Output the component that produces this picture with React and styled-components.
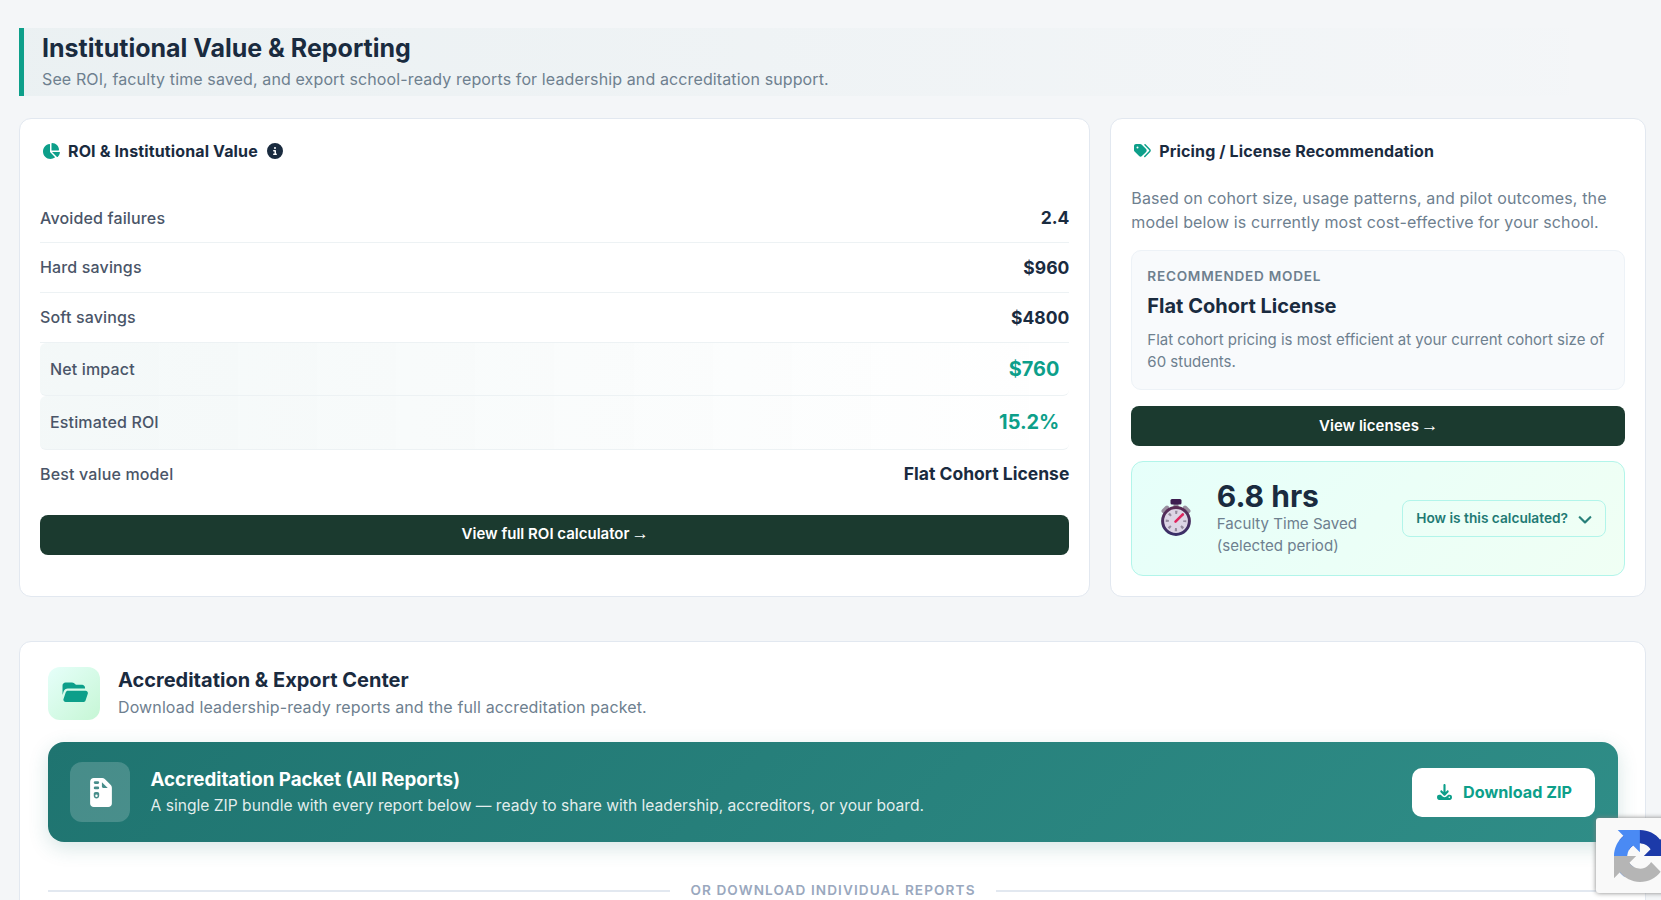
import React from "react";
import styled, { createGlobalStyle } from "styled-components";
import { FaChartPie, FaCircleInfo, FaChevronDown } from "react-icons/fa6";

const rows = [
  { label: "Avoided failures", value: "2.4" },
  { label: "Hard savings", value: "$960" },
  { label: "Soft savings", value: "$4800" },
  { label: "Net impact", value: "$760", highlight: true },
  { label: "Estimated ROI", value: "15.2%", highlight: true },
  { label: "Best value model", value: "Flat Cohort License" },
];

function TagsIcon() {
  return (
    <svg viewBox="0 0 576 512" fill="currentColor">
      <path d="M401.2 39.1L549.4 189.4c27.7 28.1 27.7 73.1 0 101.2L393 448.9c-9.3 9.4-24.5 9.5-33.9 .2s-9.5-24.5-.2-33.9L515.3 256.8c9.2-9.3 9.2-24.4 0-33.7L367 72.9c-9.3-9.4-9.2-24.6 .2-33.9s24.6-9.2 33.9 .2zM32.1 229.5L32.1 96c0-35.3 28.7-64 64-64l133.5 0c17 0 33.3 6.7 45.3 18.7l144 144c25 25 25 65.5 0 90.5L285.4 418.7c-25 25-65.5 25-90.5 0l-144-144c-12-12-18.7-28.3-18.7-45.3zm144-85.5a32 32 0 1 0-64 0 32 32 0 1 0 64 0z" />
    </svg>
  );
}

function FolderIcon() {
  return (
    <svg width="27" height="24" viewBox="0 0 576 512" fill="currentColor">
      <path d="M56 225.6L32.4 296.2 32.4 96c0-35.3 28.7-64 64-64l138.7 0c13.8 0 27.3 4.5 38.4 12.8l38.4 28.8c5.5 4.2 12.3 6.4 19.2 6.4l117.3 0c35.3 0 64 28.7 64 64l0 16-365.4 0c-41.3 0-78 26.4-91.1 65.6zM477.8 448L99 448c-32.8 0-55.9-32.1-45.5-63.2l48-144C108 221.2 126.4 208 147 208l378.8 0c32.8 0 55.9 32.1 45.5 63.2l-48 144c-6.5 19.6-24.9 32.8-45.5 32.8z" />
    </svg>
  );
}

function ZipIcon() {
  return (
    <svg width="22" height="29" viewBox="0 0 384 512" fill="currentColor">
      <path
        fillRule="evenodd"
        d="M0 64C0 28.7 28.7 0 64 0L213.5 0c17 0 33.3 6.7 45.3 18.7L365.3 125.3c12 12 18.7 28.3 18.7 45.3L384 448c0 35.3-28.7 64-64 64L64 512c-35.3 0-64-28.7-64-64L0 64zM208 74l0 78c0 13.3 10.7 24 24 24L311 176 208 74zM88 56a24 24 0 0 0 0 48l48 0a24 24 0 0 0 0-48zM88 152a24 24 0 0 0 0 48l48 0a24 24 0 0 0 0-48zM96 248c-17.7 0-32 14.3-32 32l0 32c0 26.5 21.5 48 48 48s48-21.5 48-48l0-32c0-17.7-14.3-32-32-32zM112 290a22 22 0 0 1 0 44 22 22 0 0 1 0-44z"
      />
    </svg>
  );
}

function DownloadIcon() {
  return (
    <svg width="15" height="17" viewBox="0 0 448 512" fill="currentColor">
      <path d="M256 32c0-17.7-14.3-32-32-32s-32 14.3-32 32l0 210.7-41.4-41.4c-12.5-12.5-32.8-12.5-45.3 0s-12.5 32.8 0 45.3l96 96c12.5 12.5 32.8 12.5 45.3 0l96-96c12.5-12.5 12.5-32.8 0-45.3s-32.8-12.5-45.3 0L256 242.7 256 32zM64 320c-35.3 0-64 28.7-64 64l0 32c0 35.3 28.7 64 64 64l320 0c35.3 0 64-28.7 64-64l0-32c0-35.3-28.7-64-64-64l-46.9 0-56.6 56.6c-31.2 31.2-81.9 31.2-113.1 0L110.9 320 64 320zm304 56a24 24 0 1 1 0 48 24 24 0 1 1 0-48z" />
    </svg>
  );
}

function StopwatchIcon() {
  return (
    <svg width="30" height="37" viewBox="0 0 30 37">
      <defs>
        <linearGradient id="rim" x1="0" y1="0" x2="0" y2="1">
          <stop offset="0" stopColor="#5a2b55" />
          <stop offset="1" stopColor="#3a3068" />
        </linearGradient>
      </defs>
      <path d="M2.5 12l3.5-3.5M27.5 12l-3.5-3.5" stroke="#998fa0" strokeWidth="4" strokeLinecap="round" />
      <rect x="12.5" y="4" width="5" height="6" fill="#8d8496" />
      <rect x="9.5" y="0" width="11" height="5.5" rx="1.5" fill="#3d1d50" />
      <circle cx="15" cy="22" r="13.4" fill="#ddd5e5" stroke="url(#rim)" strokeWidth="3" />
      <circle cx="15" cy="22" r="8.7" fill="none" stroke="#958b9d" strokeWidth="3.2" strokeDasharray="2.2 4.633" strokeDashoffset="1.1" />
      <path d="M14.5 22.7l7.3-7.3" stroke="#e0245e" strokeWidth="2.6" strokeLinecap="round" />
    </svg>
  );
}

function RecaptchaLogo() {
  return (
    <svg width="52" height="52" viewBox="0 0 64 64">
      <path fill="#1c3aa9" d="M64 31.955l-.033-1.37V4.687l-7.16 7.16C50.948 4.674 42.033.093 32.05.093c-10.4 0-19.622 4.96-25.458 12.64l11.736 11.86a15.55 15.55 0 0 1 4.754-5.334c2.05-1.6 4.952-2.906 8.968-2.906.485 0 .86.057 1.135.163 4.976.393 9.288 3.14 11.828 7.124l-8.307 8.307L64 31.953" />
      <path fill="#4a8af4" d="M31.862.094l-1.37.033H4.594l7.16 7.16C4.58 13.147 0 22.06 0 32.046c0 10.4 4.96 19.622 12.64 25.458L24.5 45.768a15.55 15.55 0 0 1-5.334-4.754c-1.6-2.05-2.906-4.952-2.906-8.968 0-.485.057-.86.163-1.135.393-4.976 3.14-9.288 7.124-11.828l8.307 8.307L31.86.095" />
      <path fill="#b5b5b5" d="M.001 32.045l.033 1.37v25.898l7.16-7.16c5.86 7.173 14.774 11.754 24.76 11.754 10.4 0 19.622-4.96 25.458-12.64l-11.736-11.86a15.55 15.55 0 0 1-4.754 5.334c-2.05 1.6-4.952 2.906-8.968 2.906-.485 0-.86-.057-1.135-.163-4.976-.393-9.288-3.14-11.828-7.124l8.307-8.307L0 32.047" />
    </svg>
  );
}

function App() {
  return (
    <Page>
      <GlobalStyle />
      <SectionHeader>
        <h1>Institutional Value &amp; Reporting</h1>
        <p>See ROI, faculty time saved, and export school-ready reports for leadership and accreditation support.</p>
      </SectionHeader>

      <Grid>
        <Card>
          <CardTitle>
            <FaChartPie />
            <h2>ROI &amp; Institutional Value</h2>
            <InfoIcon />
          </CardTitle>
          <RowList>
            {rows.map((row) => (
              <Row key={row.label} $highlight={row.highlight}>
                <span>{row.label}</span>
                <strong>{row.value}</strong>
              </Row>
            ))}
          </RowList>
          <DarkButton $lift={3}>
            View full ROI calculator <Arrow>→</Arrow>
          </DarkButton>
        </Card>

        <Card>
          <CardTitle>
            <TagsIcon />
            <h2>Pricing / License Recommendation</h2>
          </CardTitle>
          <Intro>
            Based on cohort size, usage patterns, and pilot outcomes, the model below is currently most
            cost-effective for your school.
          </Intro>
          <ModelBox>
            <ModelLabel>Recommended model</ModelLabel>
            <ModelName>Flat Cohort License</ModelName>
            <ModelText>Flat cohort pricing is most efficient at your current cohort size of 60 students.</ModelText>
          </ModelBox>
          <DarkButton $lift={1}>
            View licenses <Arrow>→</Arrow>
          </DarkButton>
          <TimeCard>
            <StopwatchIcon />
            <TimeText>
              <strong>6.8 hrs</strong>
              <span>Faculty Time Saved (selected period)</span>
            </TimeText>
            <HowButton>
              How is this calculated?
              <FaChevronDown />
            </HowButton>
          </TimeCard>
        </Card>
      </Grid>

      <ExportCard>
        <ExportHeader>
          <FolderTile>
            <FolderIcon />
          </FolderTile>
          <ExportTitle>
            <h2>Accreditation &amp; Export Center</h2>
            <p>Download leadership-ready reports and the full accreditation packet.</p>
          </ExportTitle>
        </ExportHeader>
        <Banner>
          <ZipTile>
            <ZipIcon />
          </ZipTile>
          <BannerText>
            <h3>Accreditation Packet (All Reports)</h3>
            <p>A single ZIP bundle with every report below — ready to share with leadership, accreditors, or your board.</p>
          </BannerText>
          <DownloadButton>
            <DownloadIcon />
            Download ZIP
          </DownloadButton>
        </Banner>
        <Divider>Or download individual reports</Divider>
      </ExportCard>

      <RecaptchaBadge>
        <RecaptchaLogo />
      </RecaptchaBadge>
    </Page>
  );
}

export default App;

const GlobalStyle = createGlobalStyle`
  * {
    box-sizing: border-box;
  }
  body {
    margin: 0;
    background: #f4f6f8;
    font-family: Inter, "Liberation Sans", sans-serif;
    color: #1a2b3f;
    overflow: hidden;
  }
  h1, h2, h3, p {
    margin: 0;
  }
  button {
    font-family: inherit;
    cursor: pointer;
  }
`;
const Page = styled.div`
  height: 900px;
  overflow: hidden;
  padding: 28px 15px 0 19px;
`;
const SectionHeader = styled.header`
  height: 68px;
  padding: 4px 0 0 18px;
  border-left: 5px solid #0d9f8a;
  background: linear-gradient(90deg, rgba(31, 122, 122, 0.045), rgba(31, 122, 122, 0));
  h1 {
    font-size: 25px;
    font-weight: 700;
    line-height: 32px;
  }
  p {
    font-size: 16px;
    line-height: 24px;
    letter-spacing: 0.12px;
    margin-top: 3px;
    color: #6e808f;
  }
`;
const Grid = styled.div`
  display: grid;
  grid-template-columns: 2fr 1fr;
  gap: 20px;
  margin-top: 22px;
`;
const Card = styled.section`
  height: 479px;
  padding: 20px;
  background: #fff;
  border: 1px solid #e2e8f0;
  border-radius: 12px;
`;
const CardTitle = styled.div`
  display: flex;
  align-items: center;
  height: 24px;
  padding-left: 2px;
  h2 {
    font-size: 16px;
    font-weight: 700;
    letter-spacing: 0.13px;
    margin-left: 8px;
  }
  > svg:first-child {
    width: 18px;
    height: 16px;
    color: #0d9f8a;
  }
`;
const InfoIcon = styled(FaCircleInfo)`
  width: 16px;
  height: 16px;
  margin-left: 9px;
`;
const RowList = styled.div`
  margin: 30.2px 0 16.2px;
`;
const Row = styled.div`
  display: flex;
  align-items: center;
  justify-content: space-between;
  height: ${(props) => (props.$highlight ? "53.6px" : "49.8px")};
  padding: ${(props) => (props.$highlight ? "0 10px" : "0")};
  border-bottom: 1px solid #edf2f4;
  border-radius: ${(props) => (props.$highlight ? "6px" : "0")};
  background: ${(props) =>
    props.$highlight ? "linear-gradient(90deg, rgba(31, 122, 122, 0.05), rgba(31, 122, 122, 0))" : "none"};
  span {
    font-size: 16px;
    font-weight: 500;
    letter-spacing: 0.15px;
    color: #4a5568;
  }
  strong {
    font-size: ${(props) => (props.$highlight ? "19.9px" : "17.5px")};
    font-weight: 700;
    color: ${(props) => (props.$highlight ? "#0d9f8a" : "#1a2b3f")};
  }
  &:last-child {
    height: 48.8px;
    padding-bottom: 1px;
    border-bottom: none;
  }
`;
const DarkButton = styled.button`
  display: block;
  width: 100%;
  height: 40px;
  padding: 0 0 ${(props) => props.$lift}px;
  border: none;
  border-radius: 8px;
  background: #1b3a2f;
  color: #fff;
  font-size: 15px;
  font-weight: 600;
`;
const Arrow = styled.span`
  margin: 0 -1px 0 -2px;
  font-family: "Liberation Sans", sans-serif;
  font-size: 17.5px;
  font-weight: 400;
  line-height: 1;
`;
const Intro = styled.p`
  margin-top: 23px;
  font-size: 16px;
  line-height: 24px;
  letter-spacing: 0.125px;
  color: #6e808f;
`;
const ModelBox = styled.div`
  height: 140px;
  margin: 16px 0;
  padding: 16px 15px;
  background: #f8fafc;
  border: 1px solid #edf2f7;
  border-radius: 10px;
`;
const ModelLabel = styled.div`
  font-size: 13.6px;
  font-weight: 600;
  line-height: 19px;
  letter-spacing: 0.74px;
  text-transform: uppercase;
  color: #6e808f;
`;
const ModelName = styled.div`
  margin-top: 5px;
  font-size: 20px;
  font-weight: 700;
  line-height: 30px;
`;
const ModelText = styled.div`
  margin-top: 8px;
  font-size: 15px;
  line-height: 22px;
  color: #6e808f;
`;
const TimeCard = styled.div`
  display: flex;
  align-items: center;
  height: 115px;
  margin-top: 15px;
  padding: 0 18px 0 29px;
  border: 1px solid #b2f5ea;
  border-radius: 12px;
  background: linear-gradient(135deg, #e6fffa, #f0fff4);
  > svg {
    margin-bottom: 2px;
  }
`;
const TimeText = styled.div`
  flex: 1;
  margin-left: 25.5px;
  strong {
    display: block;
    font-size: 30px;
    font-weight: 700;
    line-height: 32px;
  }
  span {
    display: block;
    width: 160px;
    margin-top: 1px;
    font-size: 15.1px;
    line-height: 22px;
    color: #6e808f;
  }
`;
const HowButton = styled.button`
  display: flex;
  align-items: center;
  gap: 10px;
  height: 37px;
  padding: 0 13px 1px;
  border: 1px solid #b2f5ea;
  border-radius: 8px;
  background: transparent;
  color: #1f7a74;
  font-size: 13.7px;
  font-weight: 600;
  svg {
    width: 14px;
    height: 14px;
    margin-top: 1px;
    stroke: currentColor;
    stroke-width: 20px;
  }
`;
const ExportCard = styled.section`
  height: 400px;
  margin-top: 44px;
  padding: 25px 27px 0 28px;
  background: #fff;
  border: 1px solid #e2e8f0;
  border-radius: 12px;
`;
const ExportHeader = styled.div`
  display: flex;
  align-items: center;
  gap: 18px;
  height: 53px;
`;
const ExportTitle = styled.div`
  padding-bottom: 3px;
  h2 {
    font-size: 20px;
    font-weight: 700;
    line-height: 28px;
  }
  p {
    font-size: 16px;
    line-height: 24px;
    letter-spacing: 0.12px;
    margin-top: 1px;
    color: #6e808f;
  }
`;
const FolderTile = styled.div`
  display: flex;
  align-items: center;
  justify-content: center;
  width: 52px;
  height: 53px;
  padding-bottom: 2px;
  border-radius: 12px;
  background: linear-gradient(135deg, #e6fffa, #c6f6d5);
  color: #0d9f8a;
`;
const Banner = styled.div`
  display: flex;
  align-items: center;
  height: 100px;
  margin-top: 22px;
  padding: 0 23px 0 22px;
  border-radius: 16px;
  background: linear-gradient(135deg, #1f7470, #2f8d87);
  box-shadow: 0 6px 20px rgba(31, 116, 112, 0.18);
  color: #fff;
`;
const ZipTile = styled.div`
  display: flex;
  align-items: center;
  justify-content: center;
  width: 60px;
  height: 60px;
  padding-left: 1px;
  border-radius: 12px;
  background: rgba(255, 255, 255, 0.18);
`;
const BannerText = styled.div`
  flex: 1;
  margin-left: 20.5px;
  padding-bottom: 2px;
  h3 {
    font-size: 18.75px;
    font-weight: 700;
    line-height: 29px;
  }
  p {
    font-size: 15.62px;
    line-height: 24px;
    color: rgba(255, 255, 255, 0.88);
  }
`;
const DownloadButton = styled.button`
  display: flex;
  align-items: center;
  justify-content: center;
  gap: 11px;
  width: 183px;
  height: 49px;
  padding: 0 0 0 2px;
  border: none;
  border-radius: 10px;
  background: #fff;
  color: #0d9f8a;
  font-size: 16.2px;
  font-weight: 700;
`;
const Divider = styled.div`
  display: flex;
  align-items: center;
  gap: 20px;
  margin-top: 38px;
  font-size: 13.6px;
  font-weight: 600;
  line-height: 21px;
  letter-spacing: 1.1px;
  text-transform: uppercase;
  color: #9aa8be;
  &::before,
  &::after {
    content: "";
    flex: 1;
    height: 2px;
    background: #e2e8f0;
  }
`;
/* floats over the page, partly past the right edge */
const RecaptchaBadge = styled.div`
  position: fixed;
  right: -191px;
  bottom: 7px;
  width: 256px;
  height: 75px;
  padding: 12px 18px;
  border-radius: 3px;
  background: #f9f9f9;
  box-shadow: 0 0 5px gray;
`;
